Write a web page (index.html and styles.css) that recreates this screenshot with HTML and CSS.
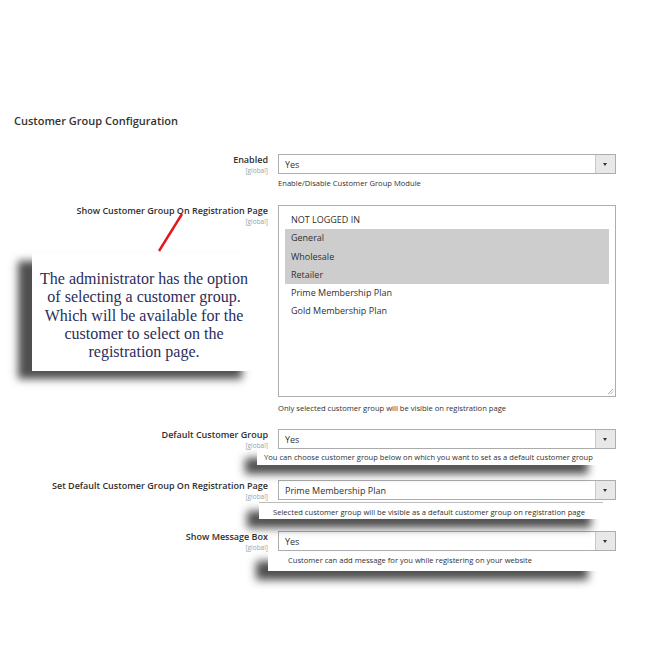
FILE: index.html
```html
<!DOCTYPE html>
<html>
<head>
<meta charset="utf-8">
<link rel="stylesheet" href="styles.css">
</head>
<body>
<div class="page">
  <h2 class="title">Customer Group Configuration</h2>

  <div class="row r1">
    <div class="label"><span class="name">Enabled</span><span class="scope">[global]</span></div>
    <div class="control">
      <div class="select"><span class="val">Yes</span><span class="arrow"></span></div>
      <div class="note">Enable/Disable Customer Group Module</div>
    </div>
  </div>

  <div class="row r2">
    <div class="label"><span class="name">Show Customer Group On Registration Page</span><span class="scope">[global]</span></div>
    <div class="control">
      <div class="multi">
        <div class="opt">NOT LOGGED IN</div>
        <div class="opt sel">General</div>
        <div class="opt sel">Wholesale</div>
        <div class="opt sel">Retailer</div>
        <div class="opt">Prime Membership Plan</div>
        <div class="opt">Gold Membership Plan</div>
        <svg class="grip" width="7" height="7" viewBox="0 0 7 7"><path d="M6 1 L1 6 M6 3.5 L3.5 6" stroke="#999" stroke-width="0.8"/></svg>
      </div>
      <div class="note n2">Only selected customer group will be visible on registration page</div>
    </div>
  </div>

  <div class="row r3">
    <div class="label"><span class="name">Default Customer Group</span><span class="scope">[global]</span></div>
    <div class="control">
      <div class="select"><span class="val">Yes</span><span class="arrow"></span></div>
      <div class="popnote p3">You can choose customer group below on which you want to set as a default customer group</div>
    </div>
  </div>

  <div class="row r4">
    <div class="label"><span class="name">Set Default Customer Group On Registration Page</span><span class="scope">[global]</span></div>
    <div class="control">
      <div class="select"><span class="val">Prime Membership Plan</span><span class="arrow"></span></div>
      <div class="popnote p4">Selected customer group will be visible as a default customer group on registration page</div>
    </div>
  </div>

  <div class="row r5">
    <div class="label"><span class="name">Show Message Box</span><span class="scope">[global]</span></div>
    <div class="control">
      <div class="select"><span class="val">Yes</span><span class="arrow"></span></div>
      <div class="popnote p5">Customer can add message for you while registering on your website</div>
    </div>
  </div>

  <div class="callout">The administrator has the option<br>of selecting a customer group.<br>Which will be available for the<br>customer to select on the<br>registration page.</div>
  <svg class="pointer" width="40" height="50" viewBox="0 0 40 50"><line x1="31" y1="4" x2="8" y2="41" stroke="#e3161b" stroke-width="2.4"/></svg>
</div>
</body>
</html>
```

FILE: styles.css
```css
html, body {
  margin: 0;
  padding: 0;
  background: #ffffff;
}
.page {
  position: relative;
  width: 670px;
  height: 670px;
  font-family: "Open Sans", "Noto Sans", sans-serif;
  color: #303030;
  padding-top: 114px;
  box-sizing: border-box;
}
.title {
  margin: 0 0 26px 14px;
  font-size: 11px;
  line-height: 14px;
  font-weight: 600;
  color: #333333;
}
.row {
  display: grid;
  grid-template-columns: 268px 338px;
  column-gap: 10px;
}
.label {
  display: flex;
  flex-direction: column;
  align-items: flex-end;
  padding-top: 0;
}
.name {
  font-size: 9px;
  line-height: 12px;
  font-weight: 600;
  color: #303030;
  white-space: nowrap;
}
.scope {
  font-size: 6.5px;
  line-height: 9px;
  color: #a0a0a0;
}
.control {
  display: flex;
  flex-direction: column;
}
.select {
  height: 20px;
  box-sizing: border-box;
  border: 1px solid #adadad;
  display: flex;
  align-items: center;
  background: #fff;
}
.val {
  flex: 1;
  font-size: 9px;
  padding-left: 6px;
  color: #303030;
}
.arrow {
  width: 19px;
  height: 18px;
  background: #e8e8e8;
  border-left: 1px solid #c8c8c8;
  position: relative;
}
.arrow::after {
  content: "";
  position: absolute;
  left: 7px;
  top: 8px;
  border-left: 2.5px solid transparent;
  border-right: 2.5px solid transparent;
  border-top: 3px solid #333;
}
.note {
  font-size: 7.6px;
  line-height: 12px;
  margin-top: 3px;
  color: #303030;
}
.n2 { margin-top: 5px; }
.r1 { margin-bottom: 16px; }
.r2 { margin-bottom: 15px; }
.r3 { margin-bottom: 15px; }
.r4 { margin-bottom: 12px; }
.multi {
  position: relative;
  height: 192px;
  box-sizing: border-box;
  border: 1px solid #adadad;
  padding: 5px 6px 0 6px;
}
.opt {
  height: 18.3px;
  line-height: 18.3px;
  font-size: 9px;
  padding-left: 6px;
  color: #303030;
}
.opt.sel {
  background: #cdcdcd;
}
.grip {
  position: absolute;
  right: 1px;
  bottom: 1px;
}
.popnote {
  position: relative;
  z-index: 1;
  background: #fff;
  font-size: 7.6px;
  line-height: 16px;
  color: #303030;
  box-shadow: -12px 9px 9px rgba(30, 30, 30, 0.78);
  white-space: nowrap;
}
.p3 {
  margin-left: -21px;
  width: 343px;
  padding-left: 7px;
  box-sizing: border-box;
  height: 16px;
}
.p4 {
  margin-left: -19px;
  margin-top: 2px;
  width: 344px;
  padding-left: 14px;
  box-sizing: border-box;
  height: 17px;
  line-height: 19px;
  border-top: 1px solid #bdbdbd;
}
.p5 {
  margin-left: -10px;
  margin-top: 1px;
  width: 332px;
  padding-left: 20px;
  box-sizing: border-box;
  height: 19px;
  line-height: 17px;
}
.callout {
  position: absolute;
  left: 32px;
  top: 253px;
  width: 224px;
  height: 118px;
  box-sizing: border-box;
  padding-top: 17px;
  background: #fff;
  box-shadow: -14px 8px 8px rgba(40, 40, 40, 0.82);
  font-family: "Liberation Serif", "Times New Roman", serif;
  font-size: 16px;
  line-height: 18.3px;
  color: #2b2d5c;
  text-align: center;
  white-space: nowrap;
  z-index: 2;
}
.pointer {
  position: absolute;
  left: 151px;
  top: 210px;
  z-index: 3;
}
```
